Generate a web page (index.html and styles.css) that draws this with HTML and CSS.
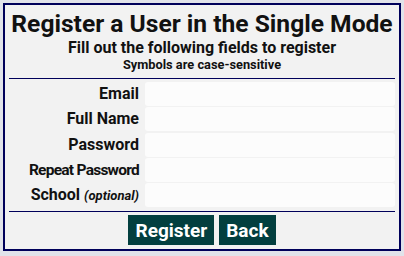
FILE: index.html
```html
<!DOCTYPE html>
<html>
<head>
<meta charset="utf-8">
<link rel="stylesheet" href="styles.css">
</head>
<body>
<div class="panel">
  <h1 class="title">Register a User in the Single Mode</h1>
  <p class="subtitle">Fill out the following fields to register</p>
  <p class="note">Symbols are case-sensitive</p>
  <hr class="rule">
  <form class="fields">
    <label class="label" for="email">Email</label>
    <input class="field" id="email" type="text">
    <label class="label" for="name">Full Name</label>
    <input class="field" id="name" type="text">
    <label class="label" for="pw">Password</label>
    <input class="field" id="pw" type="password">
    <label class="label label-tight" for="pw2">Repeat Password</label>
    <input class="field" id="pw2" type="password">
    <label class="label" for="school">School <em class="opt">(optional)</em></label>
    <input class="field" id="school" type="text">
  </form>
  <hr class="rule rule-bottom">
  <div class="actions">
    <button class="btn" type="button">Register</button>
    <button class="btn" type="button">Back</button>
  </div>
</div>
</body>
</html>
```
FILE: styles.css
```css
html, body {
  margin: 0;
  padding: 0;
}
body {
  background: #e1e3ea;
  font-family: Roboto, "Liberation Sans", sans-serif;
  font-weight: 700;
  color: #111;
  padding: 3px;
  box-sizing: border-box;
  width: 404px;
  height: 256px;
}
.panel {
  background: #f2f2f2;
  border: 2px solid #00005a;
  padding: 4px;
  display: flex;
  flex-direction: column;
}
.title {
  margin: 0;
  padding-top: 1px;
  font-size: 24.6px;
  line-height: 28px;
  text-align: center;
  font-weight: 700;
  white-space: nowrap;
}
.subtitle {
  margin: 1px 0 0;
  font-size: 16px;
  line-height: 18px;
  text-align: center;
}
.note {
  margin: 0;
  font-size: 12.8px;
  line-height: 16px;
  text-align: center;
}
.rule {
  border: 0;
  border-top: 1px solid #00005a;
  margin: 5px 0 3px;
  height: 0;
}
.rule-bottom {
  margin: 3px 0 3px;
}
.fields {
  display: grid;
  grid-template-columns: 130px 1fr;
  column-gap: 6px;
  row-gap: 1.25px;
  margin: 0;
}
.label {
  text-align: right;
  font-size: 16px;
  line-height: 24px;
  white-space: nowrap;
}
.label-tight {
  font-size: 15.5px;
  letter-spacing: -0.75px;
}
.opt {
  font-size: 13px;
  font-style: italic;
}
.field {
  height: 24px;
  box-sizing: border-box;
  border: 0;
  border-radius: 3px;
  background: #fcfcfc;
  margin: 0;
  padding: 0 4px;
}
.actions {
  display: flex;
  justify-content: center;
  gap: 5px;
}
.btn {
  background: #033f3f;
  color: #fff;
  border: 0;
  font-family: Roboto, "Liberation Sans", sans-serif;
  font-weight: 700;
  font-size: 19px;
  height: 30px;
  padding: 0 7px;
  margin: 0;
}
```
